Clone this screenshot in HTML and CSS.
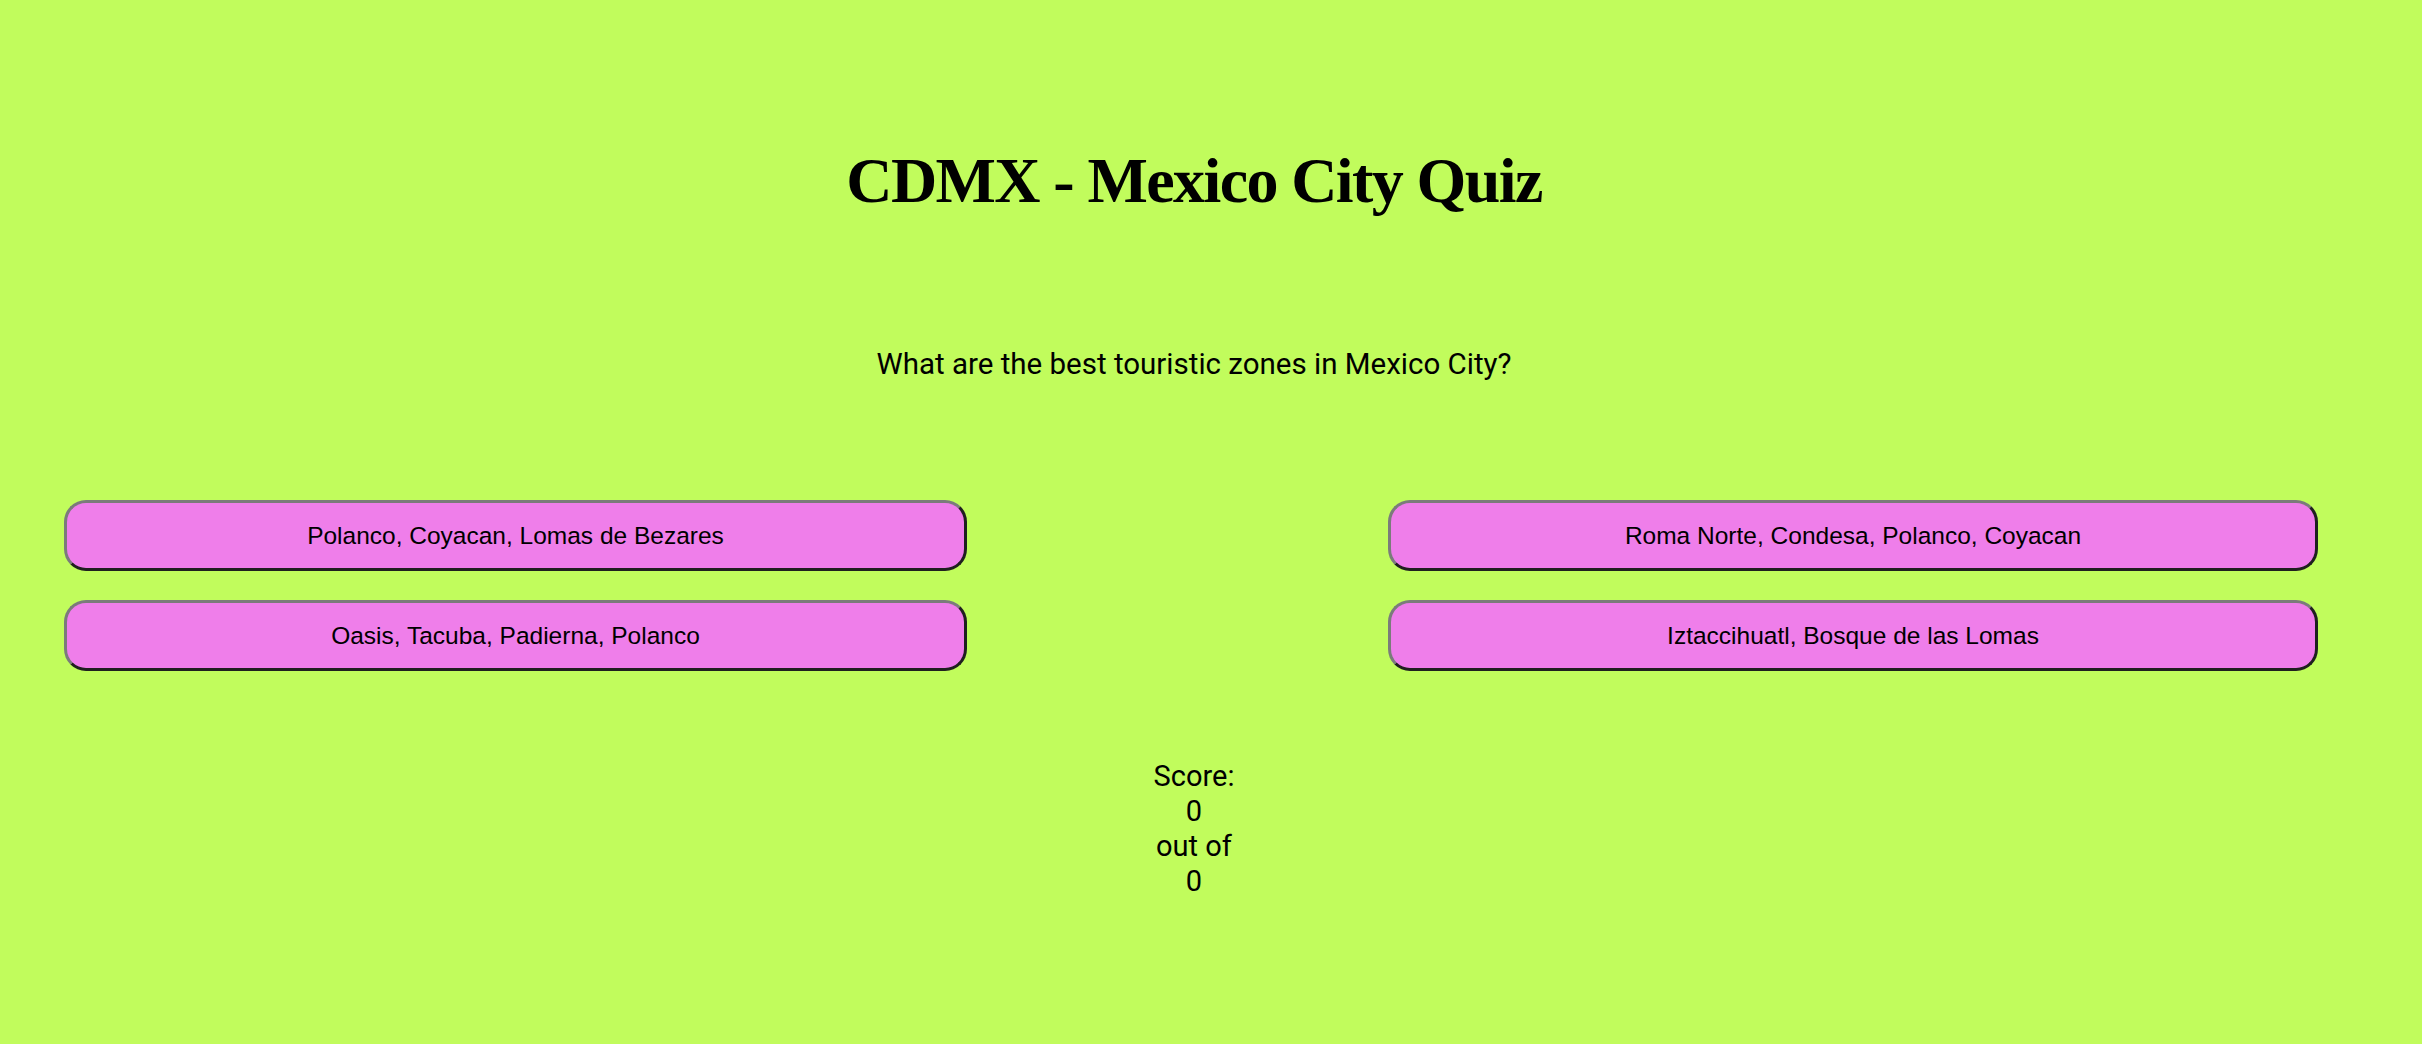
FILE: index.html
```html
<!DOCTYPE html>
<html lang="en">
<head>
<meta charset="utf-8">
<title>CDMX - Mexico City Quiz</title>
<link rel="stylesheet" href="styles.css">
</head>
<body>
<main class="page">
  <h1 class="title">CDMX - Mexico City Quiz</h1>
  <p class="question">What are the best touristic zones in Mexico City?</p>
  <div class="answers">
    <button class="answer">Polanco, Coyacan, Lomas de Bezares</button>
    <button class="answer">Roma Norte, Condesa, Polanco, Coyacan</button>
    <button class="answer">Oasis, Tacuba, Padierna, Polanco</button>
    <button class="answer">Iztaccihuatl, Bosque de las Lomas</button>
  </div>
  <div class="score">
    <span class="score-line">Score:</span>
    <span class="score-line">0</span>
    <span class="score-line">out of</span>
    <span class="score-line">0</span>
  </div>
</main>
</body>
</html>
```

FILE: styles.css
```css
html, body {
  margin: 0;
  padding: 0;
  background: #c1fc5c;
}

body {
  width: 2422px;
  height: 1044px;
  overflow: hidden;
}

.page {
  width: 2388px;
  display: flex;
  flex-direction: column;
  align-items: center;
}

.title {
  margin: 141px 0 0;
  font-family: "Liberation Serif", "Times New Roman", serif;
  font-weight: 700;
  font-size: 64px;
  line-height: 80px;
  letter-spacing: -1.6px;
  color: #000;
}

.question {
  margin: 126px 0 0;
  font-family: Roboto, "Noto Sans", sans-serif;
  font-size: 29.5px;
  line-height: 34px;
  color: #000;
}

.answers {
  align-self: stretch;
  margin-top: 119px;
  padding: 0 70px 0 64px;
  display: grid;
  grid-template-columns: 903px 930px;
  justify-content: space-between;
  row-gap: 29px;
}

.answer {
  height: 71px;
  margin: 0;
  padding: 0;
  background: #ef7eea;
  border-width: 3px;
  border-style: solid;
  border-color: #7b7b7b #1f1f1f #1f1f1f #7b7b7b;
  border-radius: 22px;
  font-family: "Liberation Sans", Arial, sans-serif;
  font-size: 24.5px;
  color: #000;
}

.score {
  margin-top: 88px;
  text-align: center;
  font-family: Roboto, "Noto Sans", sans-serif;
  font-size: 29px;
  line-height: 35px;
  color: #000;
}

.score-line {
  display: block;
}
```
